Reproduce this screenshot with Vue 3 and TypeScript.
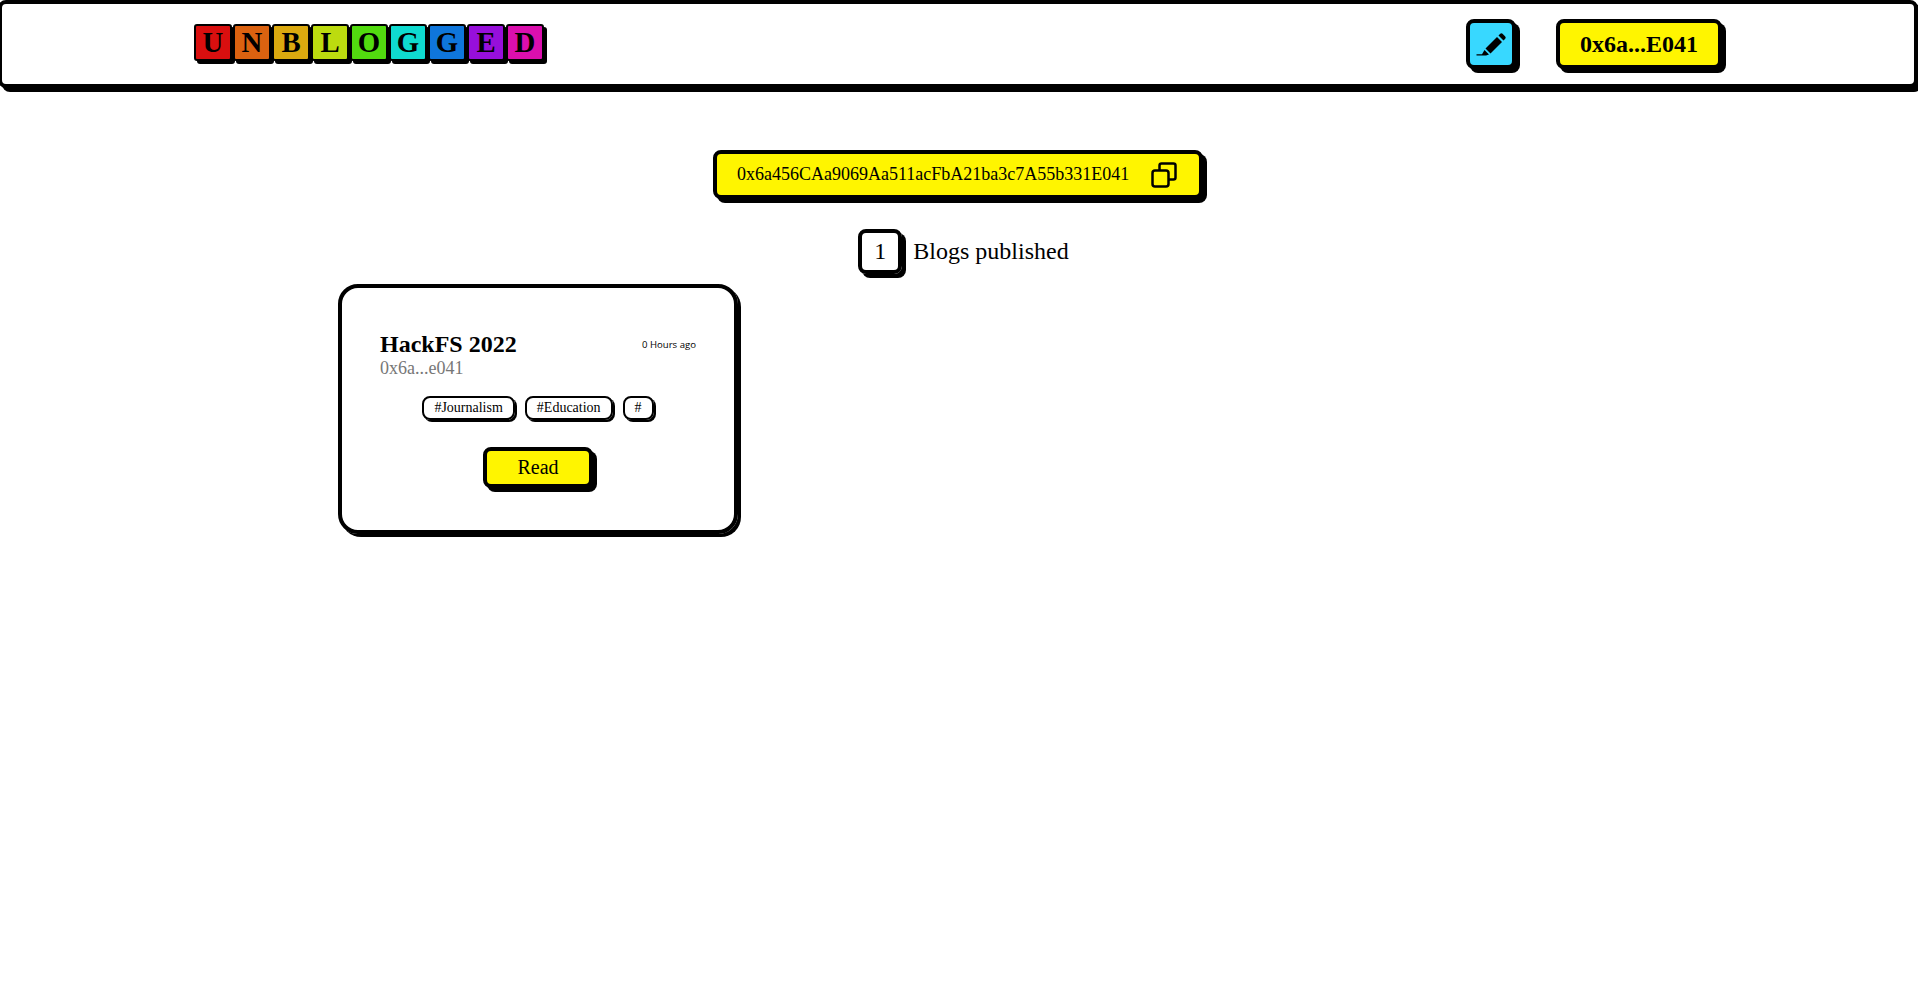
<script setup lang="ts">
const letters = [
  { ch: 'U', color: '#d90f0f' },
  { ch: 'N', color: '#db6210' },
  { ch: 'B', color: '#dba90f' },
  { ch: 'L', color: '#bcdb0f' },
  { ch: 'O', color: '#52db0f' },
  { ch: 'G', color: '#0fdbd0' },
  { ch: 'G', color: '#0f76db' },
  { ch: 'E', color: '#970fdb' },
  { ch: 'D', color: '#db0fae' },
]
const tags = ['#Journalism', '#Education', '#']
</script>

<template>
  <div class="page">
    <nav class="navbar">
      <div class="logo">
        <span v-for="(l, i) in letters" :key="i" class="tile" :style="{ background: l.color }">{{ l.ch }}</span>
      </div>
      <div class="nav-right">
        <button class="write-btn">
          <svg width="30" height="30" viewBox="0 0 30 30">
            <path d="M9.500 19.500 21 8l5 5-11.500 11.500z" fill="#000" />
            <path d="M22.500 6.500 24 5a2 2 0 0 1 2.800 0l2.200 2.200a2 2 0 0 1 0 2.800l-1.500 1.500z" fill="#000" />
            <path d="M8.500 21l4.500 4.500-3 1H0.500v-1.200H6z" fill="#000" />
          </svg>
        </button>
        <button class="wallet-btn">0x6a...E041</button>
      </div>
    </nav>

    <main class="content">
      <div class="address">
        <span>0x6a456CAa9069Aa511acFbA21ba3c7A55b331E041</span>
        <svg width="26" height="26" viewBox="0 0 26 26" fill="none" stroke="#000" stroke-width="2.500">
          <rect x="1.500" y="8.500" width="16" height="16" rx="2.500" />
          <path d="M8.500 8.500V3.500a2 2 0 0 1 2-2h12a2 2 0 0 1 2 2v12a2 2 0 0 1-2 2h-5" />
        </svg>
      </div>

      <div class="count-row">
        <span class="count">1</span>
        <span class="count-label">Blogs published</span>
      </div>

      <div class="grid">
        <article class="card">
          <div class="card-head">
            <div>
              <h3 class="title">HackFS 2022</h3>
              <div class="author">0x6a...e041</div>
            </div>
            <span class="time">0 Hours ago</span>
          </div>
          <div class="tags">
            <span v-for="t in tags" :key="t" class="tag">{{ t }}</span>
          </div>
          <button class="read-btn">Read</button>
        </article>
      </div>
    </main>
  </div>
</template>

<style>
html, body { margin: 0; overflow: hidden; background: #fff; }
</style>

<style scoped>
.page {
  width: 1918px;
  height: 981px;
  font-family: "Liberation Serif", "Times New Roman", serif;
  color: #000;
  overflow: hidden;
}
.navbar {
  box-sizing: border-box;
  width: 1920px;
  height: 88px;
  margin-left: -2px;
  border: 4px solid #000;
  border-radius: 8px;
  box-shadow: 4px 4px 0 #000;
  background: #fff;
  display: flex;
  align-items: center;
  padding: 0 0 0 192px;
}
.logo { display: flex; gap: 1px; margin-top: -3px; }
.tile {
  box-sizing: border-box;
  width: 38px;
  height: 37px;
  border: 2px solid #000;
  border-radius: 3px;
  box-shadow: 3px 3px 0 #000;
  font-size: 28.800px;
  font-weight: 700;
  line-height: 33px;
  text-align: center;
}
.nav-right {
  margin-left: auto;
  margin-right: 192px;
  display: flex;
  align-items: center;
  gap: 40px;
}
button {
  font-family: inherit;
  color: #000;
  cursor: pointer;
}
.write-btn {
  box-sizing: border-box;
  width: 50px;
  height: 50px;
  padding: 0;
  border: 4px solid #000;
  border-radius: 8px;
  box-shadow: 4px 4px 0 #000;
  background: #38d8ff;
  display: flex;
  align-items: center;
  justify-content: center;
}
.wallet-btn {
  box-sizing: border-box;
  width: 166px;
  height: 50px;
  padding: 0;
  border: 4px solid #000;
  border-radius: 8px;
  box-shadow: 4px 4px 0 #000;
  background: #fff500;
  font-size: 24px;
  font-weight: 700;
}
.content {
  display: flex;
  flex-direction: column;
  align-items: center;
  padding-right: 2px;
}
.address {
  box-sizing: border-box;
  margin-top: 62px;
  width: 490px;
  height: 49px;
  border: 4px solid #000;
  border-radius: 8px;
  box-shadow: 4px 4px 0 #000;
  background: #fff500;
  display: flex;
  align-items: center;
  padding: 0 22px 0 20px;
  justify-content: space-between;
  font-size: 18px;
}
.count-row {
  margin-top: 30px;
  display: flex;
  align-items: center;
  gap: 11px;
  margin-left: 11px;
}
.count {
  box-sizing: border-box;
  width: 44px;
  height: 45px;
  border: 4px solid #000;
  border-radius: 8px;
  box-shadow: 4px 4px 0 #000;
  font-size: 24px;
  display: flex;
  align-items: center;
  justify-content: center;
}
.count-label { font-size: 24px; }
.grid {
  align-self: stretch;
  padding-left: 338px;
  margin-top: 10px;
}
.card {
  box-sizing: border-box;
  width: 400px;
  height: 250px;
  border: 4px solid #000;
  border-radius: 20px;
  box-shadow: 3px 3px 0 #000;
  padding: 42px 38px 0;
  display: flex;
  flex-direction: column;
  align-items: center;
}
.card-head {
  align-self: stretch;
  display: flex;
  justify-content: space-between;
  align-items: flex-start;
}
.title { margin: 0; font-size: 24px; font-weight: 700; line-height: 28px; }
.author { font-size: 18px; line-height: 20px; color: #777; }
.time { font-family: "Open Sans", sans-serif; font-size: 9.600px; line-height: 14px; margin-top: 8px; }
.tags { display: flex; gap: 10px; margin-top: 18px; }
.tag {
  box-sizing: border-box;
  height: 24px;
  padding: 0 10px;
  border: 2px solid #000;
  border-radius: 8px;
  box-shadow: 2px 2px 0 #000;
  font-size: 14px;
  line-height: 20px;
}
.read-btn {
  box-sizing: border-box;
  margin-top: 27px;
  width: 110px;
  height: 41px;
  padding: 0;
  border: 4px solid #000;
  border-radius: 8px;
  box-shadow: 4px 4px 0 #000;
  background: #fff500;
  font-size: 20px;
}
</style>
